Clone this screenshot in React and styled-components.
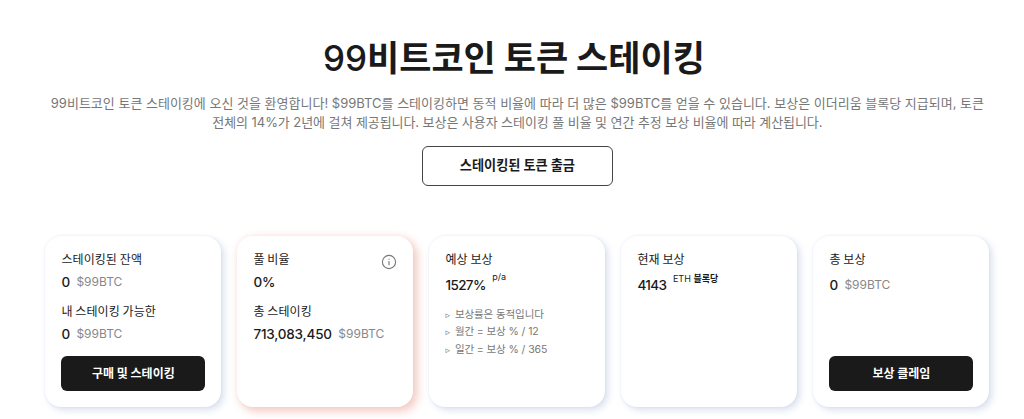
import React from 'react'
import styled, { createGlobalStyle, css } from 'styled-components'

const balances = [
    { label: "스테이킹된 잔액", value: "0" },
    { label: "내 스테이킹 가능한", value: "0" },
]
const notes = ["보상률은 동적입니다", "월간 = 보상 % / 12", "일간 = 보상 % / 365"]

export default function App() {
    return (
    <Wrapper>
        <GlobalStyle />
        <Title><span>99</span>비트코인 토큰 스테이킹</Title>
        <Description>
            <Line>99비트코인 토큰 스테이킹에 오신 것을 환영합니다! $99BTC를 스테이킹하면 동적 비율에 따라 더 많은 $99BTC를 얻을 수 있습니다. 보상은 이더리움 블록당 지급되며, 토큰</Line>
            <Line $spacing="-0.07px">전체의 14%가 2년에 걸쳐 제공됩니다. 보상은 사용자 스테이킹 풀 비율 및 연간 추정 보상 비율에 따라 계산됩니다.</Line>
        </Description>
        <WithdrawButton>스테이킹된 토큰 출금</WithdrawButton>

        <Cards>
            <Card>
                {balances.map(item =>
                    <Stat key={item.label}>
                        <Label>{item.label}</Label>
                        <Row><Value>{item.value}</Value><Unit>$99BTC</Unit></Row>
                    </Stat>
                )}
                <Button>구매 및 스테이킹</Button>
            </Card>

            <Card $highlight>
                <InfoIcon viewBox="0 0 16 16">
                    <circle cx="8" cy="8" r="6.6" />
                    <path d="M8 7v4.2M8 4.7v1.1" />
                </InfoIcon>
                <Stat>
                    <Label>풀 비율</Label>
                    <Row><Value>0%</Value></Row>
                </Stat>
                <Stat>
                    <Label>총 스테이킹</Label>
                    <Row><Value>713,083,450</Value><Unit>$99BTC</Unit></Row>
                </Stat>
            </Card>

            <Card>
                <Label>예상 보상</Label>
                <Row $tall><Value $tight>1527%</Value><Sup>p/a</Sup></Row>
                <Notes>
                    {notes.map(note => <li key={note}>{note}</li>)}
                </Notes>
            </Card>

            <Card>
                <Label>현재 보상</Label>
                <Row $tall><Value $tight>4143</Value><Sup $low>ETH <b>블록당</b></Sup></Row>
            </Card>

            <Card>
                <Label>총 보상</Label>
                <Row $tall><Value>0</Value><Unit>$99BTC</Unit></Row>
                <Button>보상 클레임</Button>
            </Card>
        </Cards>
    </Wrapper>
    )
}

const GlobalStyle = createGlobalStyle`
body {
    margin: 0;
    background: #fff;
    color: #1a1a1a;
    font-family: Inter, "Noto Sans CJK KR", sans-serif;
    overflow: hidden;
}
* {
    box-sizing: border-box;
}
`
const Wrapper = styled.div`
    display: flex;
    flex-direction: column;
    align-items: center;
    width: 944px;
    height: 419px;
    margin-left: 45.4px;
    padding-top: 30px;
`
const Title = styled.h1`
    margin: 0 7px 0 0;
    height: 52px;
    line-height: 52px;
    font-family: "Noto Sans CJK KR", sans-serif;
    font-size: 35px;
    font-weight: 700;
    white-space: nowrap;
    span {
        font-family: Inter, sans-serif;
        font-size: 35px;
        font-weight: 500;
    }
`
const Description = styled.div`
    margin-top: 11px;
    color: #777;
    font-size: 13px;
    text-align: center;
`
const Line = styled.div`
    height: 19px;
    line-height: 20px;
    white-space: nowrap;
    letter-spacing: ${({ $spacing }) => $spacing || 'normal'};
`
const WithdrawButton = styled.button`
    width: 191px;
    height: 40px;
    margin-top: 15px;
    padding: 0 0 3px;
    border: 1px solid #444;
    border-radius: 6px;
    background: #fff;
    color: #1a1a1a;
    font-family: "Noto Sans CJK KR", sans-serif;
    font-size: 13.2px;
    font-weight: 700;
`
const Cards = styled.div`
    display: grid;
    grid-template-columns: repeat(5, 176px);
    gap: 16px;
    margin-top: 50px;
`
const Card = styled.div`
    position: relative;
    display: flex;
    flex-direction: column;
    height: 171px;
    padding: 13px 16px 16px;
    border-radius: 16px;
    background: #fff;
    box-shadow: 3px 3px 7px rgba(70, 100, 180, 0.2), 0 0 2px rgba(70, 100, 180, 0.12);
    ${({ $highlight }) => $highlight && css`
        box-shadow: 4px 4px 9px 1px rgba(215, 90, 70, 0.27), 0 0 6px rgba(215, 90, 70, 0.1);
    `}
`
const Stat = styled.div`
    height: 52px;
`
const Label = styled.div`
    height: 20px;
    line-height: 20px;
    font-family: "Noto Sans CJK KR", sans-serif;
    font-size: 12px;
    font-weight: 400;
    letter-spacing: 0.08px;
`
const Row = styled.div`
    display: flex;
    align-items: center;
    gap: 6.5px;
    height: ${({ $tall }) => $tall ? '32px' : '26px'};
`
const Value = styled.span`
    font-size: 13.5px;
    font-weight: 500;
    letter-spacing: ${({ $tight }) => $tight ? '-0.6px' : '-0.2px'};
`
const Unit = styled.span`
    padding-bottom: 1px;
    color: #888;
    font-size: 12px;
`
const Sup = styled.span`
    padding-bottom: ${({ $low }) => $low ? '13px' : '16px'};
    font-size: 9px;
    line-height: 12px;
    white-space: pre;
    b {
        font-weight: 700;
    }
`
const Notes = styled.ul`
    margin: 4.5px 0 0;
    padding: 0;
    list-style: none;
    color: #777;
    font-size: 10.5px;
    li {
        height: 17.5px;
        line-height: 17.5px;
        white-space: nowrap;
        letter-spacing: -0.1px;
    }
    li::before {
        content: "▹";
        display: inline-block;
        width: 9.5px;
        font-family: "DejaVu Sans", sans-serif;
        font-size: 9px;
    }
`
const Button = styled.button`
    width: 144px;
    height: 35px;
    margin-top: auto;
    padding: 0 0 3px;
    border: none;
    border-radius: 6px;
    background: #1a1a1a;
    color: #fff;
    font-family: "Noto Sans CJK KR", sans-serif;
    font-size: 12px;
    font-weight: 700;
`
const InfoIcon = styled.svg`
    position: absolute;
    top: 18px;
    right: 16px;
    width: 16px;
    height: 16px;
    fill: none;
    stroke: #777;
    stroke-width: 1.1;
`
